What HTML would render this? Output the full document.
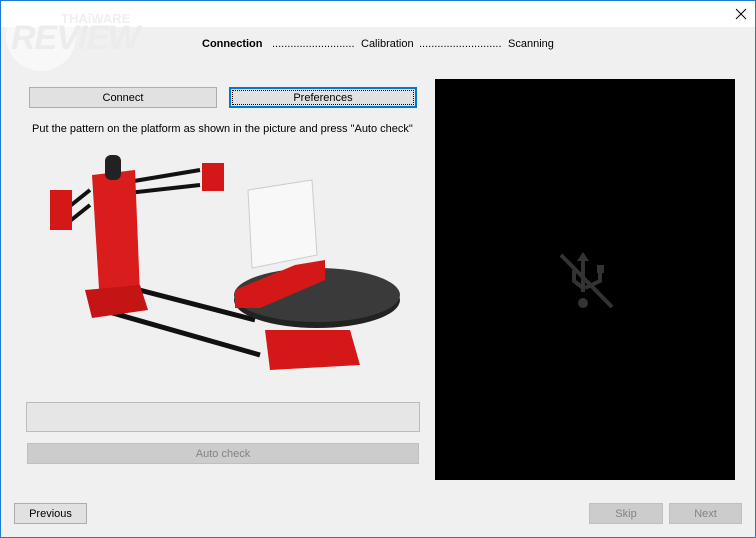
<!DOCTYPE html>
<html><head><style>
body{margin:0;width:756px;height:538px;overflow:hidden;font-family:"Liberation Sans",sans-serif;font-size:11px;color:#000}
.win{position:absolute;left:0;top:0;width:754px;height:536px;border:1px solid #1c7ad0;background:#f0f0f0}
.title{position:absolute;left:0;top:0;width:754px;height:26px;background:#fff}
.b{position:absolute;box-sizing:border-box;border:1px solid #adadad;background:#e1e1e1;text-align:center;font-size:11px}
.dis{background:#cccccc;border-color:#bfbfbf;color:#838383}
.t{position:absolute;white-space:nowrap}
</style></head><body>
<div class="win">
<div class="title"></div>
<svg style="position:absolute;left:733px;top:6px" width="14" height="14"><path d="M2 2L12 12M12 2L2 12" stroke="#000" stroke-width="1"/></svg>
<div style="position:absolute;left:5px;top:0;width:70px;height:70px;border-radius:50%;background:rgba(255,255,255,.5)"></div>
<div class="t" style="left:10px;top:18px;font-size:34px;font-style:italic;font-weight:bold;color:#ececec;letter-spacing:-1px">REVIEW</div>
<div class="t" style="left:60px;top:10px;font-size:13px;font-weight:bold;color:#efefef">THAiWARE</div>

<div class="t" style="left:201px;top:37px;font-weight:bold">Connection</div>
<div class="t" style="left:271px;top:37px">...........................</div>
<div class="t" style="left:360px;top:37px">Calibration</div>
<div class="t" style="left:418px;top:37px">...........................</div>
<div class="t" style="left:507px;top:37px">Scanning</div>

<div class="b" style="left:28px;top:86px;width:188px;height:21px;line-height:21px">Connect</div>
<div class="b" style="left:228px;top:86px;width:188px;height:21px;line-height:19px;border:2px solid #0078d7;outline:1px dotted #000;outline-offset:-4px">Preferences</div>
<div class="t" style="left:31px;top:122px">Put the pattern on the platform as shown in the picture and press "Auto check"</div>

<svg style="position:absolute;left:29px;top:139px" width="390" height="240">
<polygon points="218,50 282,40 287,115 222,128" fill="#f8f8f8" stroke="#ccc"/>
<line x1="90" y1="145" x2="225" y2="180" stroke="#111" stroke-width="5"/>
<line x1="72" y1="170" x2="230" y2="215" stroke="#111" stroke-width="5"/>
<line x1="80" y1="45" x2="170" y2="30" stroke="#111" stroke-width="4"/>
<line x1="80" y1="55" x2="170" y2="45" stroke="#111" stroke-width="4"/>
<line x1="35" y1="70" x2="60" y2="50" stroke="#111" stroke-width="4"/>
<line x1="35" y1="85" x2="60" y2="65" stroke="#111" stroke-width="4"/>
<polygon points="235,190 320,190 330,225 240,230" fill="#d41818"/>
<ellipse cx="287" cy="160" rx="83" ry="28" fill="#222"/>
<ellipse cx="287" cy="155" rx="83" ry="27" fill="#3a3a3a"/>
<polygon points="205,150 265,125 295,120 295,140 230,168 205,168" fill="#d41818"/>
<polygon points="62,35 105,30 110,155 70,165" fill="#d91c1c"/>
<polygon points="55,150 110,145 118,170 62,178" fill="#c41414"/>
<rect x="75" y="15" width="16" height="25" rx="6" fill="#222"/>
<rect x="172" y="23" width="22" height="28" fill="#d41818"/>
<rect x="20" y="50" width="22" height="40" fill="#d41818"/>
</svg>

<div class="b" style="left:25px;top:401px;width:394px;height:30px;background:#e6e6e6;border-color:#bcbcbc"></div>
<div class="b dis" style="left:26px;top:442px;width:392px;height:21px;line-height:21px">Auto check</div>

<div style="position:absolute;left:434px;top:78px;width:300px;height:401px;background:#000"></div>
<svg style="position:absolute;left:539px;top:229px" width="90" height="90">
<g fill="#333" stroke="#333">
<polygon points="43,22 49,31 45,31 45,62 41,62 41,31 37,31" stroke="none"/>
<rect x="57" y="35" width="7" height="8" stroke="none"/>
<path d="M60,43 V51 L45,58 M34,40 V51 L43,58" fill="none" stroke-width="4"/>
<circle cx="43" cy="73" r="5" stroke="none"/>
<line x1="21" y1="25" x2="72" y2="77" stroke-width="4"/>
</g></svg>

<div class="b" style="left:13px;top:502px;width:73px;height:21px;line-height:21px">Previous</div>
<div class="b dis" style="left:588px;top:502px;width:74px;height:21px;line-height:21px">Skip</div>
<div class="b dis" style="left:668px;top:502px;width:73px;height:21px;line-height:21px">Next</div>
</div>
</body></html>
